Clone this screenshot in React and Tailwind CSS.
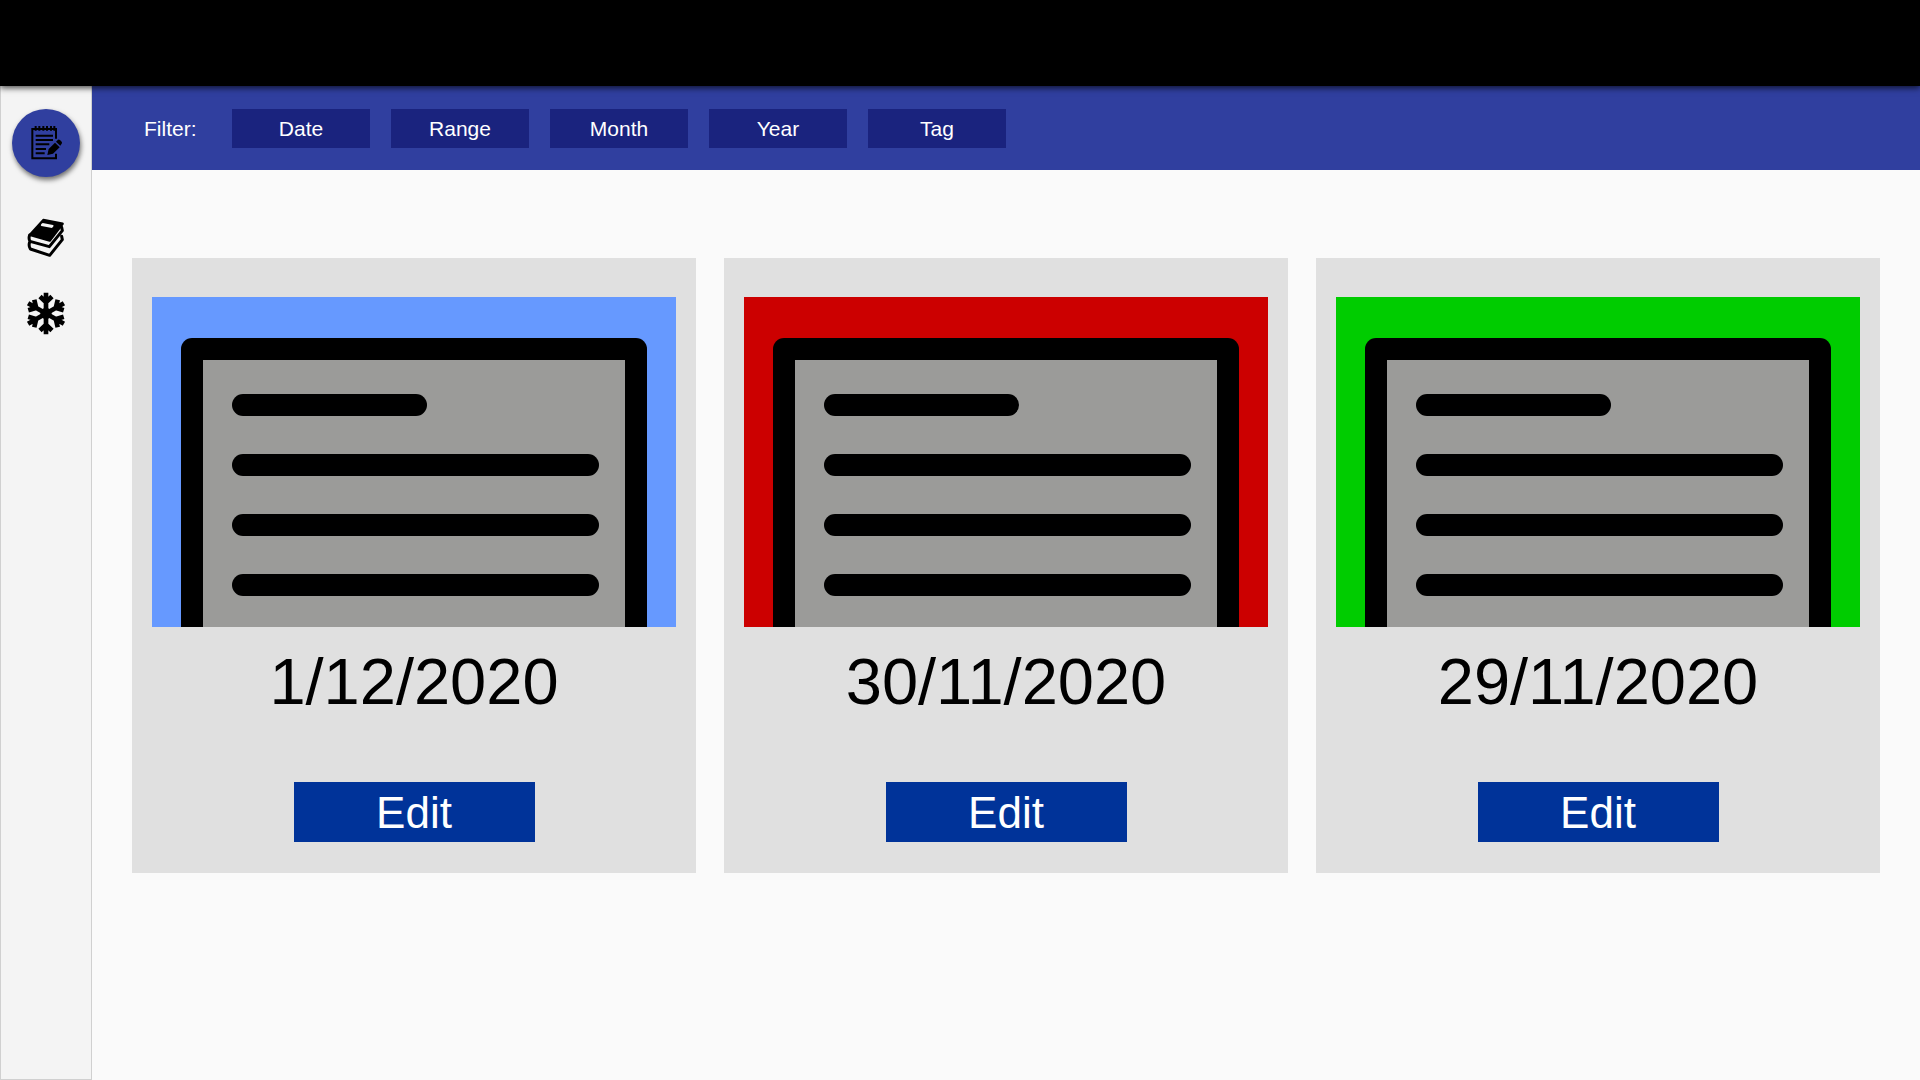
import React from "react";

const filters = ["Date", "Range", "Month", "Year", "Tag"];

const notes = [
  { date: "1/12/2020", color: "bg-[#6699ff]" },
  { date: "30/11/2020", color: "bg-[#cc0000]" },
  { date: "29/11/2020", color: "bg-[#00cc00]" },
];

function NotepadIcon() {
  return (
    <svg viewBox="0 0 93 102" className="h-[34px] w-[31px]" fill="none" stroke="#000" aria-hidden="true">
      <path d="M75 38V9H4v88h71V83" strokeWidth="6" />
      <path d="M14 0v14M25 0v14M37 0v14M48 0v14M60 0v14M70 0v14" strokeWidth="6" />
      <path d="M14 29h52M14 42h52M14 55h41M14 69h31M14 82h27" strokeWidth="6" />
      <path d="M49 87l4-18 19-19 14 14-20 19zM75 47l6-6q3-2 6 1l5 5q2 3 0 6l-4 6z" fill="#000" stroke="none" />
    </svg>
  );
}

function BooksIcon() {
  return (
    <svg viewBox="0 0 114 120" className="h-10 w-[38px]" fill="none" stroke="#000" strokeLinejoin="round" strokeLinecap="round" aria-hidden="true">
      <path d="M49 6L107 17 68 68 8 51z" fill="#000" strokeWidth="7" />
      <path d="M43 18l4-3 31 6q3 1 1 4l-4 5-32-6q-3-1 0-6z" fill="#f4f4f4" stroke="none" />
      <path d="M8 51q-4 10 1 19l58 16 39-48-2-10M8 72q-4 12 2 21l58 19 38-47-2-10" strokeWidth="9" />
    </svg>
  );
}

function SnowflakeIcon() {
  return (
    <svg viewBox="-60 -64 120 128" className="h-[43px] w-10" fill="none" stroke="#000" strokeWidth="14" aria-hidden="true">
      <circle r="10" fill="#000" />
      {[0, 60, 120, 180, 240, 300].map((angle) => (
        <path key={angle} transform={`rotate(${angle})`} d="M0 0V-62M-18 -51L0 -34 18 -51" />
      ))}
    </svg>
  );
}

function NoteCard({ date, color }) {
  return (
    <article className="flex flex-col items-center bg-[#e0e0e0] px-5 pt-[39px] pb-[31px]">
      <div className={`h-[330px] w-full overflow-hidden px-[29px] pt-[41px] ${color}`}>
        <div className="h-[400px] rounded-[11px] bg-black p-[22px]">
          <div className="flex h-full flex-col gap-[38px] bg-[#9b9b99] pt-[34px] pr-[26px] pl-[29px]">
            <div className="h-[22px] w-[53%] shrink-0 rounded-full bg-black" />
            <div className="h-[22px] w-full shrink-0 rounded-full bg-black" />
            <div className="h-[22px] w-full shrink-0 rounded-full bg-black" />
            <div className="h-[22px] w-full shrink-0 rounded-full bg-black" />
          </div>
        </div>
      </div>
      <h2 className="mt-[18px] text-[65px] leading-[74px]">{date}</h2>
      <button type="button" className="mt-[63px] h-[60px] w-[241px] bg-[#003399] text-[44px] leading-[62px] text-white">
        Edit
      </button>
    </article>
  );
}

export default function App() {
  return (
    <div className="flex min-h-screen flex-col bg-[#fafafa] font-['Liberation_Sans',Arial,sans-serif] text-black">
      <header className="relative h-[86px] shrink-0 bg-black shadow-[0_2px_6px_rgba(0,0,0,0.7)]" />
      <div className="flex flex-1">
        <nav aria-label="Main" className="flex w-[92px] shrink-0 flex-col items-center border border-t-0 border-[#d0d0d0] bg-[#f4f4f4] pt-[23px]">
          <button type="button" aria-label="Notes" className="flex size-[68px] items-center justify-center rounded-full bg-[#303f9f] shadow-[1px_3px_5px_rgba(0,0,0,0.55)]">
            <NotepadIcon />
          </button>
          <button type="button" aria-label="Books" className="mt-[41px]">
            <BooksIcon />
          </button>
          <button type="button" aria-label="Frozen" className="mt-[34px]">
            <SnowflakeIcon />
          </button>
        </nav>
        <main className="min-w-0 flex-1">
          <div className="flex h-[84px] items-start bg-[#303f9f] pt-[23px] pl-[52px] text-[21px] leading-[39px] text-white">
            <span className="w-[88px]">Filter:</span>
            <div className="flex gap-[21px]">
              {filters.map((name) => (
                <button key={name} type="button" className="h-[39px] w-[138px] bg-[#1a237e]">
                  {name}
                </button>
              ))}
            </div>
          </div>
          <section className="grid grid-cols-3 gap-7 pt-[88px] pr-10 pl-10">
            {notes.map((note) => (
              <NoteCard key={note.date} {...note} />
            ))}
          </section>
        </main>
      </div>
    </div>
  );
}
